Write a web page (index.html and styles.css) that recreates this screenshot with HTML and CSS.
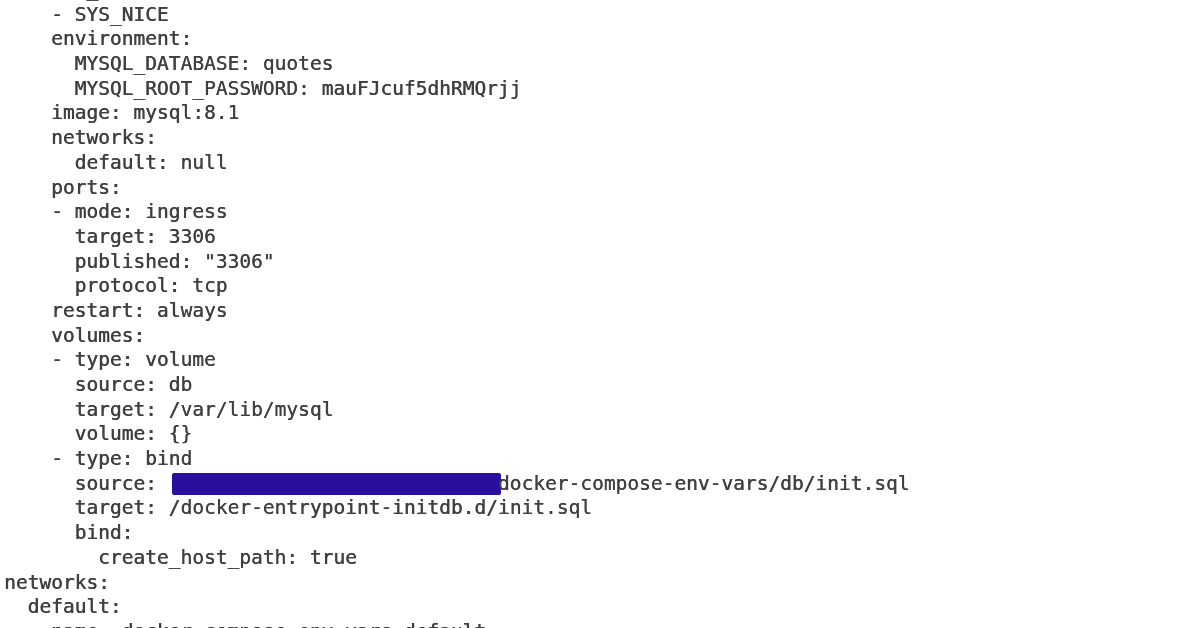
FILE: index.html
```html
<!DOCTYPE html>
<html lang="en">
<head>
<meta charset="utf-8">
<title>docker compose config</title>
<link rel="stylesheet" href="styles.css">
</head>
<body>
<pre class="yaml">    cap_add:
    - SYS_NICE
    environment:
      MYSQL_DATABASE: quotes
      MYSQL_ROOT_PASSWORD: mauFJcuf5dhRMQrjj
    image: mysql:8.1
    networks:
      default: null
    ports:
    - mode: ingress
      target: 3306
      published: "3306"
      protocol: tcp
    restart: always
    volumes:
    - type: volume
      source: db
      target: /var/lib/mysql
      volume: {}
    - type: bind
      source: <span class="redact"></span>docker-compose-env-vars/db/init.sql
      target: /docker-entrypoint-initdb.d/init.sql
      bind:
        create_host_path: true
networks:
  default:
    name: docker-compose-env-vars_default</pre>
</body>
</html>
```

FILE: styles.css
```css
html, body {
  margin: 0;
  padding: 0;
  background: #ffffff;
  overflow: hidden;
}

.yaml {
  margin: -22px 0 0 0;
  padding-left: 4px;
  font-family: "DejaVu Sans Mono", "Liberation Mono", monospace;
  font-size: 19.55px;
  line-height: 24.68px;
  color: #404040;
  white-space: pre;
  text-shadow: 0.4px 0 0 #404040;
  filter: blur(0.45px);
}

.redact {
  display: inline-block;
  width: 28ch;
  height: 22px;
  margin-left: 3px;
  margin-right: -3px;
  vertical-align: -5px;
  background: #2a0f9e;
  border-radius: 2px;
}
```
